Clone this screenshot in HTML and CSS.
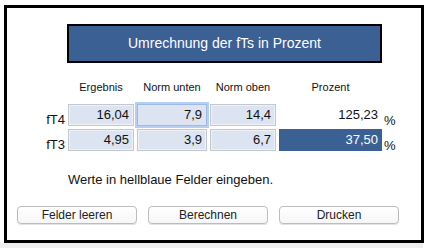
FILE: index.html
```html
<!DOCTYPE html>
<html lang="de">
<head>
  <meta charset="UTF-8" />
  <title>Umrechnung der fTs in Prozent</title>
  <link rel="stylesheet" href="styles.css">
</head>
<body>
  <div class="frame">
    <div class="title">Umrechnung der fTs in Prozent</div>

    <div class="grid">
      <div></div>
      <div class="head">Ergebnis</div>
      <div class="head">Norm unten</div>
      <div class="head">Norm oben</div>
      <div class="head">Prozent</div>
      <div></div>

      <div class="label">fT4</div>
      <input class="field" value="16,04">
      <input class="field focus" value="7,9">
      <input class="field" value="14,4">
      <div class="result">125,23</div>
      <div class="unit">%</div>

      <div class="label">fT3</div>
      <input class="field" value="4,95">
      <input class="field" value="3,9">
      <input class="field" value="6,7">
      <div class="result marked">37,50</div>
      <div class="unit">%</div>
    </div>

    <p class="hint">Werte in hellblaue Felder eingeben.</p>

    <div class="buttons">
      <button>Felder leeren</button>
      <button>Berechnen</button>
      <button>Drucken</button>
    </div>
  </div>
  <div class="strip"></div>
</body>
</html>
```

FILE: styles.css
```css
body {
  margin: 0;
  background: #fff;
  color: #111;
  font-family: "Liberation Sans", Arial, sans-serif;
}
.frame {
  margin: 5px 0 0 4px;
  width: 420px;
  height: 238px;
  box-sizing: border-box;
  border: 3px solid #000;
  overflow: hidden;
}
.strip {
  width: 423px;
  height: 5px;
  background: #efefef;
}
.title {
  margin: 16px 0 0 60px;
  width: 315px;
  height: 39px;
  box-sizing: border-box;
  border: 2px solid #000;
  background: #3b6094;
  color: #fff;
  font-size: 14px;
  line-height: 35px;
  text-align: center;
}
.grid {
  display: grid;
  grid-template-columns: 58px 66px 70px 66px 103px auto;
  grid-template-rows: 19px 22px 22px;
  column-gap: 3px;
  row-gap: 3px;
  margin-top: 19px;
}
.grid .head:first-of-type { }
.head {
  font-size: 11px;
  line-height: 13px;
  text-align: center;
  align-self: start;
  margin-top: -1px;
}
.label, .unit {
  align-self: end;
  font-size: 13px;
  line-height: 15px;
}
.label {
  text-align: right;
  margin-bottom: -1px;
}
.unit {
  margin-left: -1px;
  margin-bottom: -2px;
}
.field {
  width: 100%;
  height: 22px;
  margin: 0;
  padding: 0 4px 1px 0;
  box-sizing: border-box;
  border: 1px solid #c3c8cf;
  box-shadow: inset 0 0 0 1px #eef2f7;
  background: #dbe4f0;
  font-family: inherit;
  font-size: 13px;
  color: #111;
  text-align: right;
}
.field.focus {
  outline: none;
  border-color: #9bbbe4;
  box-shadow: 0 0 0 2px #b6cff0;
}
.result {
  font-size: 13px;
  line-height: 21px;
  text-align: right;
  padding-right: 4px;
}
.result.marked {
  background: #3b6094;
  color: #fff;
  line-height: 22px;
}
.hint {
  margin: 21px 0 0 61px;
  font-size: 13px;
  line-height: 15px;
}
.buttons {
  display: flex;
  gap: 11px;
  margin: 19px 0 0 10px;
}
button {
  width: 120px;
  height: 18px;
  padding: 0;
  border: 1px solid #bcbcbc;
  border-radius: 4px;
  background: linear-gradient(#fff, #f6f6f6);
  box-shadow: 0 1px 0 #e2e2e2;
  font-family: inherit;
  font-size: 12px;
  color: #222;
}
```
